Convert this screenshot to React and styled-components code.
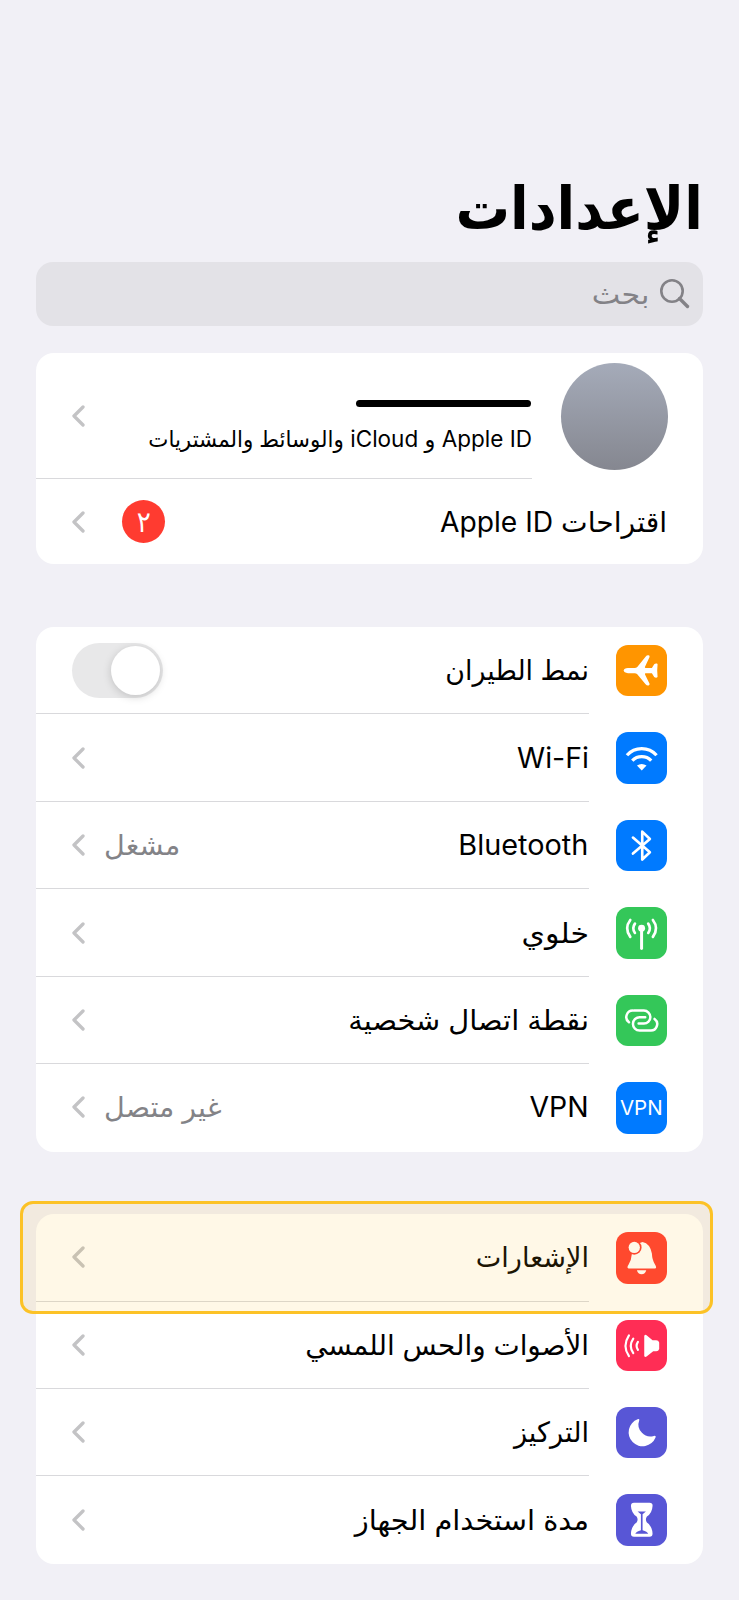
import styled, {createGlobalStyle} from 'styled-components'

const GlobalStyle = createGlobalStyle`
  * {
    box-sizing: border-box;
  }

  body {
    margin: 0;
    background: #f1f0f6;
    color: #000;
    font-family: Inter, "DejaVu Sans", sans-serif;
  }
`

const Plane = () =>
    <Glyph>
        <path d="M23 77Q24 70 36 69H56Q61 69 64 66L89 35Q93 30 98 31Q102 32 101 36L87 66Q86 69 90 69H108L115 58Q118 55 123 56Q126 57 125 60L124 77L125 94Q126 97 123 98Q118 99 115 96L108 85H90Q86 85 87 88L101 117Q102 121 98 122Q93 123 89 118L64 88Q61 85 56 85H36Q24 84 23 77Z"/>
    </Glyph>

const Wifi = () =>
    <Glyph>
        <Line d="M33 70A60 60 0 0 1 122 70M49 86A40 40 0 0 1 106 86" $width={10} $butt/>
        <path d="M63 101Q77 91 92 101L77.500 116Z"/>
    </Glyph>

const Bluetooth = () =>
    <Glyph>
        <Line d="M51 53L102 97L79 119V35L102 57L51 101" $width={8}/>
    </Glyph>

const Antenna = () =>
    <Glyph>
        <circle cx="77" cy="64" r="10.500"/>
        <Line d="M77 64V125" $width={9}/>
        <Line d="M57 50Q47 64 57 78M97 50Q107 64 97 78M43 39Q24 64 43 90M111 39Q130 64 111 90" $width={8}/>
    </Glyph>

const Link = () =>
    <Glyph>
        <Line d="M39 82A19.500 19.500 0 0 1 53 47H84A19.500 19.500 0 0 1 84 86H68M116 72A19.500 19.500 0 0 1 102 107H71A19.500 19.500 0 0 1 71 67H88" $width={7.5}/>
    </Glyph>

const Bell = () =>
    <Glyph>
        <path d="M80 30Q103 35 108 65Q109 85 117 97Q124 108 118 110H38Q31 108 38 98Q46 86 47 70Q50 35 80 30ZM63 115H91Q88 127 77 127Q66 127 63 115Z"/>
        <circle cx="55" cy="46.500" r="22" fill="#ff3b30"/>
        <circle cx="55" cy="46.500" r="17"/>
    </Glyph>

const Speaker = () =>
    <Glyph>
        <path d="M85 48Q87 42 92 46L110 61H121Q128 61 130 68V87Q128 94 121 94H112L92 110Q87 113 85 108Z"/>
        <Line d="M66 66Q58 78 66 90M52 56Q37 78 52 100M39 46Q18 78 39 109" $width={6.5}/>
    </Glyph>

const Moon = () =>
    <Glyph>
        <path d="M65 37A42 42 0 1 0 119 92Q122 86 114 87A36 36 0 0 1 70 40Q71 34 65 37Z"/>
    </Glyph>

const Hourglass = () =>
    <Glyph>
        <path d="M54 26H101Q111 26 110 36Q109 57 93 68Q87 77 93 86Q109 97 110 119Q110 129 101 129H54Q45 129 45 119Q46 97 62 86Q68 77 62 68Q46 57 45 36Q45 26 54 26Z"/>
        <path fill="#5856d6" d="M65 53H90L80 61V109Q94 113 97 120H58Q61 113 75 109V61Z"/>
    </Glyph>

const VpnMark = () => <VpnText>VPN</VpnText>

const Chevron = () =>
    <ChevronIcon viewBox="0 0 13 22">
        <path d="M11 2L2 11L11 20"/>
    </ChevronIcon>

const SearchGlyph = () =>
    <SearchIcon viewBox="0 0 30 30">
        <circle cx="12" cy="12" r="10.700"/>
        <path d="M19.500 19.500L27.500 27.500" strokeWidth="3.400"/>
    </SearchIcon>

// stretch: horizontal scale that brings the fallback face to the width of the system one
const CONNECTIONS = [
    {label: 'نمط الطيران', Icon: Plane, color: '#ff9500', stretch: 0.958, toggle: true},
    {label: 'Wi-Fi', Icon: Wifi, color: '#007aff', stretch: 1.02},
    {label: 'Bluetooth', Icon: Bluetooth, color: '#007aff', stretch: 1.03, value: 'مشغل'},
    {label: 'خلوي', Icon: Antenna, color: '#34c759', stretch: 1.07},
    {label: 'نقطة اتصال شخصية', Icon: Link, color: '#34c759', stretch: 1.03},
    {label: 'VPN', Icon: VpnMark, color: '#007aff', stretch: 1.015, value: 'غير متصل'},
]

const ALERTS = [
    {label: 'الإشعارات', Icon: Bell, color: '#ff3b30', stretch: 0.968},
    {label: 'الأصوات والحس اللمسي', Icon: Speaker, color: '#ff2d55', stretch: 0.994},
    {label: 'التركيز', Icon: Moon, color: '#5856d6', stretch: 0.97},
    {label: 'مدة استخدام الجهاز', Icon: Hourglass, color: '#5856d6', stretch: 1.032},
]

const SettingsRow = ({label, Icon, color, stretch, value, toggle, last}) =>
    <Row>
        <IconTile $color={color}><Icon/></IconTile>
        <RowBody $last={last}>
            <Label $stretch={stretch}>{label}</Label>
            {value && <Value>{value}</Value>}
            {toggle ? <Switch><Knob/></Switch> : <Chevron/>}
        </RowBody>
    </Row>

const App = () =>
    <Page dir="rtl" lang="ar">
        <GlobalStyle/>
        <Title>الإعدادات</Title>
        <SearchBar>
            <SearchGlyph/>
            <SearchText>بحث</SearchText>
        </SearchBar>
        <Card $gap={27}>
            <ProfileRow>
                <Avatar/>
                <RowBody>
                    <ProfileText>
                        <NameBar/>
                        <Subtitle>Apple ID و iCloud <Narrow>والوسائط والمشتريات</Narrow></Subtitle>
                    </ProfileText>
                    <Chevron/>
                </RowBody>
            </ProfileRow>
            <SuggestionRow>
                <Label $stretch={1.008}>اقتراحات Apple ID</Label>
                <Badge><Digit>٢</Digit></Badge>
                <Chevron/>
            </SuggestionRow>
        </Card>
        <Card $gap={63}>
            {CONNECTIONS.map((item, index) =>
                <SettingsRow key={item.label} last={index === CONNECTIONS.length - 1} {...item}/>
            )}
        </Card>
        <Card $gap={62.5}>
            {ALERTS.map((item, index) =>
                <SettingsRow key={item.label} last={index === ALERTS.length - 1} {...item}/>
            )}
            <Highlight/>
        </Card>
    </Page>

export default App;


const Page = styled.main`
  width: 739px;
  height: 1600px;
  padding: 171px 36px 0;
  overflow: hidden;
`

const Title = styled.h1`
  margin: 0;
  height: 91px;
  line-height: 74px;
  font-size: 59px;
  font-weight: 700;
  transform: scaleX(0.922);
  transform-origin: right;
`

const SearchBar = styled.div`
  display: flex;
  align-items: center;
  gap: 11px;
  height: 64px;
  padding: 0 13px;
  border-radius: 17px;
  background: #e3e2e7;
  color: #838287;
`

const SearchIcon = styled.svg`
  width: 30px;
  height: 30px;
  fill: none;
  stroke: #838287;
  stroke-width: 2.6;
  stroke-linecap: round;
`

const SearchText = styled.span`
  font-size: 28px;
  transform: scaleX(1.08);
  transform-origin: right;
`

const Card = styled.section`
  position: relative;
  margin-top: ${({$gap}) => $gap}px;
  border-radius: 18px;
  background: #fff;
`

const Row = styled.div`
  display: flex;
  align-items: center;
  gap: 27px;
  height: 87.450px;
  padding-right: 36px;
`

const RowBody = styled.div`
  display: flex;
  align-items: center;
  flex: 1;
  height: 100%;
  padding-left: 35.500px;
  border-bottom: 1px solid ${({$last}) => $last ? 'transparent' : '#d9d9dc'};
`

const ProfileRow = styled.div`
  display: flex;
  align-items: center;
  gap: 28.500px;
  height: 126px;
  padding-right: 35.500px;
`

const ProfileText = styled.div`
  flex: 1;
  padding-top: 23px;
`

const NameBar = styled.div`
  width: 175px;
  height: 7px;
  margin-right: 1px;
  border-radius: 4px;
  background: #000;
`

const Subtitle = styled.div`
  margin-top: 16px;
  line-height: 32px;
  font-size: 22.500px;
  white-space: nowrap;
`

const Narrow = styled.span`
  display: inline-block;
  transform: scaleX(0.95);
  transform-origin: right;
`

const Avatar = styled.div`
  width: 107px;
  height: 107px;
  border-radius: 50%;
  background: linear-gradient(#a5abb9, #858790);
`

const SuggestionRow = styled.div`
  display: flex;
  align-items: center;
  height: 85px;
  padding: 0 36px 0 35.500px;
`

const Label = styled.span`
  flex: 1;
  font-size: 28px;
  white-space: nowrap;
  transform: scaleX(${({$stretch}) => $stretch});
  transform-origin: right;
`

const Value = styled.span`
  margin-left: 19px;
  font-size: 28px;
  color: #838387;
  transform: scaleX(1.02);
  transform-origin: left;
`

const Badge = styled.span`
  display: flex;
  align-items: center;
  justify-content: center;
  width: 43px;
  height: 43px;
  margin-left: 37.500px;
  border-radius: 50%;
  background: #ff3b30;
  color: #fff;
`

const Digit = styled.span`
  font-size: 29px;
  transform: scaleX(0.9);
`

const ChevronIcon = styled.svg`
  width: 13px;
  height: 22px;
  fill: none;
  stroke: #c3c3c5;
  stroke-width: 3.3;
  stroke-linecap: round;
  stroke-linejoin: round;
`

const Switch = styled.div`
  display: flex;
  align-items: center;
  width: 91px;
  height: 55px;
  padding: 0 3px;
  border-radius: 28px;
  background: #e8e8e9;
`

const Knob = styled.div`
  width: 49px;
  height: 49px;
  border-radius: 50%;
  background: #fff;
  box-shadow: 0 2px 9px rgba(0, 0, 0, 0.17);
`

const IconTile = styled.div`
  display: flex;
  align-items: center;
  justify-content: center;
  width: 51.500px;
  height: 51.500px;
  border-radius: 12px;
  background: ${({$color}) => $color};
`

const Glyph = styled.svg.attrs({viewBox: '0 0 155 155'})`
  width: 100%;
  height: 100%;
  fill: #fff;
`

const Line = styled.path`
  fill: none;
  stroke: #fff;
  stroke-width: ${({$width}) => $width};
  stroke-linecap: ${({$butt}) => $butt ? 'butt' : 'round'};
  stroke-linejoin: round;
`

const VpnText = styled.span`
  color: #fff;
  font-size: 20.500px;
`

const Highlight = styled.div`
  position: absolute;
  top: -13px;
  left: -16px;
  width: 693px;
  height: 113px;
  border: 3px solid #fcc226;
  border-radius: 13px;
  background: rgba(252, 194, 38, 0.11);
`
